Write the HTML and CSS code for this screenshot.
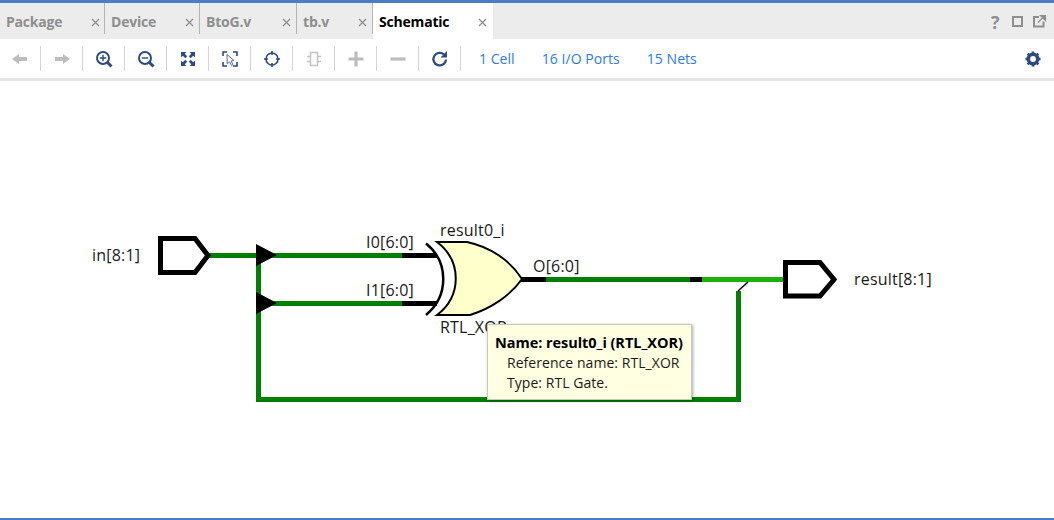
FILE: index.html
```html
<!DOCTYPE html>
<html lang="en">
<head>
<meta charset="utf-8">
<title>Schematic</title>
<link rel="stylesheet" href="styles.css">
</head>
<body>
<svg class="defs" width="0" height="0" aria-hidden="true">
  <symbol id="x" viewBox="0 0 9 9"><path d="M1 1l7 7M8 1l-7 7" fill="none" stroke="#8e8e8e" stroke-width="1.3"/></symbol>
</svg>
<div class="app">
  <div class="tabs">
    <div class="tab tab-package"><span>Package</span><svg class="close"><use href="#x"/></svg></div>
    <div class="tab tab-device"><span>Device</span><svg class="close"><use href="#x"/></svg></div>
    <div class="tab tab-btog"><span>BtoG.v</span><svg class="close"><use href="#x"/></svg></div>
    <div class="tab tab-tb"><span>tb.v</span><svg class="close"><use href="#x"/></svg></div>
    <div class="tab tab-schematic active"><span>Schematic</span><svg class="close"><use href="#x"/></svg></div>
    <div class="tab-actions">
      <svg width="60" height="28" viewBox="0 0 60 28">
        <text class="help" x="1" y="22">?</text>
        <rect x="23" y="10" width="9" height="9" fill="none" stroke="#8e8e8e" stroke-width="2"/>
        <path d="M49 10h-5v9.500h9.500v-5" fill="none" stroke="#8e8e8e" stroke-width="2"/>
        <path d="M48 15.500l6-6M50.500 8.500h5v5z" fill="#8e8e8e" stroke="#8e8e8e" stroke-width="1.200"/>
      </svg>
    </div>
  </div>
  <div class="toolbar">
    <div class="tool"><svg viewBox="0 0 20 20"><path d="M2 10l7-5v3h8v4H9v3z" fill="#bdbdbd"/></svg></div>
    <div class="tool"><svg viewBox="0 0 20 20"><path d="M18 10l-7-5v3H3v4h8v3z" fill="#bdbdbd"/></svg></div>
    <div class="tool"><svg viewBox="0 0 20 20"><circle cx="9" cy="9" r="6" fill="none" stroke="#2b4a86" stroke-width="2"/><path d="M13.500 13.500l4 4" stroke="#2b4a86" stroke-width="3"/><path d="M5.800 9h6.400M9 5.800v6.400" stroke="#2b4a86" stroke-width="1.400"/></svg></div>
    <div class="tool"><svg viewBox="0 0 20 20"><circle cx="9" cy="9" r="6" fill="none" stroke="#2b4a86" stroke-width="2"/><path d="M13.500 13.500l4 4" stroke="#2b4a86" stroke-width="3"/><path d="M5.800 9h6.400" stroke="#2b4a86" stroke-width="1.400"/></svg></div>
    <div class="tool"><svg viewBox="0 0 20 20"><path d="M3 3h5.500L6.700 4.800l2.500 2.500-1.900 1.900-2.500-2.500L3 8.500zM17 3v5.500l-1.800-1.800-2.500 2.500-1.900-1.900 2.500-2.500L11.500 3zM3 17v-5.500l1.800 1.800 2.500-2.500 1.900 1.900-2.500 2.500L8.500 17zM17 17h-5.500l1.800-1.800-2.500-2.500 1.900-1.900 2.500 2.500 1.800-1.800z" fill="#2b4a86"/></svg></div>
    <div class="tool"><svg viewBox="0 0 20 20"><path d="M3 7V3h4M13 3h4v4M17 13v4h-4M7 17H3v-4" fill="none" stroke="#2b4a86" stroke-width="1.600"/><path d="M7 5.500l7 6-3 .5 2 3.500-1.500.8-2-3.500-2.300 2z" fill="#fff" stroke="#5a6f9c" stroke-width="1"/></svg></div>
    <div class="tool"><svg viewBox="0 0 20 20"><circle cx="10" cy="10" r="6" fill="none" stroke="#2b4a86" stroke-width="1.600"/><path d="M10 2v4M10 14v4M2 10h4M14 10h4" stroke="#2b4a86" stroke-width="1.600"/></svg></div>
    <div class="tool"><svg viewBox="0 0 20 20"><rect x="6.500" y="3.500" width="7" height="13" fill="none" stroke="#c4c4c4" stroke-width="1.500"/><path d="M3 7.500h3.500M3 12.500h3.500M13.500 7.500H17M13.500 12.500H17" stroke="#c4c4c4" stroke-width="1.500"/></svg></div>
    <div class="tool"><svg viewBox="0 0 20 20"><path d="M2.500 10h15M10 2.500v15" stroke="#bdbdbd" stroke-width="3.200"/></svg></div>
    <div class="tool"><svg viewBox="0 0 20 20"><path d="M2.500 10h15" stroke="#bdbdbd" stroke-width="3.200"/></svg></div>
    <div class="tool"><svg viewBox="0 0 20 20"><path d="M16 10.500a6.300 6.300 0 1 1-2-5" fill="none" stroke="#2b4a86" stroke-width="2.300"/><path d="M17 2v6.500h-6.500z" fill="#2b4a86"/></svg></div>
    <a class="link link-cell">1 Cell</a>
    <a class="link link-ports">16 I/O Ports</a>
    <a class="link">15 Nets</a>
    <div class="gear"><svg width="18" height="18" viewBox="0 0 18 18"><circle cx="9" cy="9" r="4.700" fill="none" stroke="#2b4a86" stroke-width="3.600"/><path d="M9 1.500v15M1.500 9h15M3.700 3.700l10.600 10.600M14.300 3.700L3.700 14.300" stroke="#2b4a86" stroke-width="2.600" stroke-dasharray="3.200 8.600 3.200"/></svg></div>
  </div>
  <div class="canvas">
    <svg class="diagram" viewBox="0 81 1054 437" width="1054" height="437">
      <g class="wires">
        <path d="M208 255.500H402M258.500 255V402M258 303.500H402M258.500 399.500H738.500V291M546 279.500H690"/>
      </g>
      <path class="wire-light" d="M702 279.500H785"/>
      <path class="wire-black" d="M402 255.500H437M402 303.500H437M520 279.500H546M690 279.500H702"/>
      <path class="tap" d="M738 291L748 282"/>
      <path class="node" d="M256 244L277 255L256 266zM256 292L277 303L256 314z"/>
      <path class="port" d="M160.500 238.500H195L208 255.500L195 272.500H160.500z"/>
      <path class="port" d="M785.500 262.500H820L834 279.500L820 296H785.500z"/>
      <path class="gate-arc" d="M426 243.500C449 262 449 296 426 315"/>
      <path class="gate" d="M437 242H467C490 247 510 260 522 279C510 296 490 309 470 315H437C462 296 462 261 437 242z"/>
      <text x="92" y="261">in[8:1]</text>
      <text x="366" y="248">I0[6:0]</text>
      <text x="366" y="296">I1[6:0]</text>
      <text x="440" y="236">result0_i</text>
      <text x="440" y="333">RTL_XOR</text>
      <text x="533" y="272">O[6:0]</text>
      <text x="854" y="285">result[8:1]</text>
    </svg>
    <div class="tooltip">
      <div class="tip-title">Name: result0_i (RTL_XOR)</div>
      <div class="tip-line">Reference name: RTL_XOR</div>
      <div class="tip-line">Type: RTL Gate.</div>
    </div>
  </div>
</div>
</body>
</html>
```
FILE: styles.css
```css
* { box-sizing: border-box; }
html, body { margin: 0; padding: 0; background: #fff; }
body { font-family: "Open Sans", "Noto Sans", sans-serif; overflow: hidden; }
.defs { position: absolute; }
.app { width: 1054px; height: 520px; display: flex; flex-direction: column; border-top: 3px solid #4a7cc9; border-bottom: 2px solid #4a7cc9; }

.tabs { height: 36px; flex: none; display: flex; background: #ececec; }
.tab { height: 36px; display: flex; align-items: flex-start; padding: 10px 6px 0 6px; position: relative; font-size: 14px; font-weight: 700; line-height: 18px; color: #8e8e8e; letter-spacing: -0.2px; }
.tab::after { content: ""; position: absolute; right: 0; top: 0; width: 1px; height: 31px; background: #b4b4b4; }
.tab .close { width: 9px; height: 9px; margin-left: auto; margin-top: 5px; }
.tab-package { width: 105px; padding-right: 5px; }
.tab-device { width: 95px; }
.tab-btog { width: 97px; }
.tab-tb { width: 76px; padding-right: 6px; }
.tab-schematic { width: 120px; padding-right: 6px; }
.tab.active { background: #fff; color: #000; }
.tab.active::after { display: none; }
.tab-actions { margin-left: auto; padding: 4px 4px 0 0; }
.help { font: 700 18px "Open Sans", sans-serif; fill: #8e8e8e; }

.toolbar { height: 42px; flex: none; display: flex; align-items: center; border-bottom: 3px solid #e6e6e6; position: relative; }
.tool { width: 42px; height: 25px; flex: none; display: flex; align-items: center; justify-content: center; border-right: 1px solid #d4d4d4; }
.tool:first-child { width: 41px; }
.tool svg { width: 20px; height: 20px; display: block; }
.link { font-size: 14px; color: #2979ff; letter-spacing: 0.05px; }
.link-cell { margin-left: 18px; margin-right: 27px; }
.link-ports { margin-right: 27px; }
.gear { margin-left: auto; margin-right: 12px; height: 18px; }

.canvas { flex: 1; position: relative; min-height: 0; }
.diagram { display: block; }
.diagram text { font: 16px "Open Sans", sans-serif; fill: #1a1a1a; letter-spacing: 0.2px; }
.wires { fill: none; stroke: #008000; stroke-width: 5; }
.wire-light { fill: none; stroke: #1ab20a; stroke-width: 5; }
.wire-black { fill: none; stroke: #000; stroke-width: 5; }
.tap { fill: none; stroke: #000; stroke-width: 1.500; }
.node { fill: #000; }
.port { fill: #fff; stroke: #000; stroke-width: 5; }
.gate { fill: #ffffcc; stroke: #000; stroke-width: 2; }
.gate-arc { fill: none; stroke: #000; stroke-width: 2.500; }

.tooltip { position: absolute; left: 487px; top: 243px; width: 205px; height: 76px; background: #ffffe1; border: 1px solid #c9c9b8; box-shadow: 1px 1px 3px rgba(0,0,0,.35); padding: 8px 7px; font-size: 14px; line-height: 20px; color: #1a1a1a; letter-spacing: 0.05px; }
.tip-title { font-size: 14.500px; font-weight: 700; color: #000; letter-spacing: -0.05px; }
.tip-line { padding-left: 12px; }
```
